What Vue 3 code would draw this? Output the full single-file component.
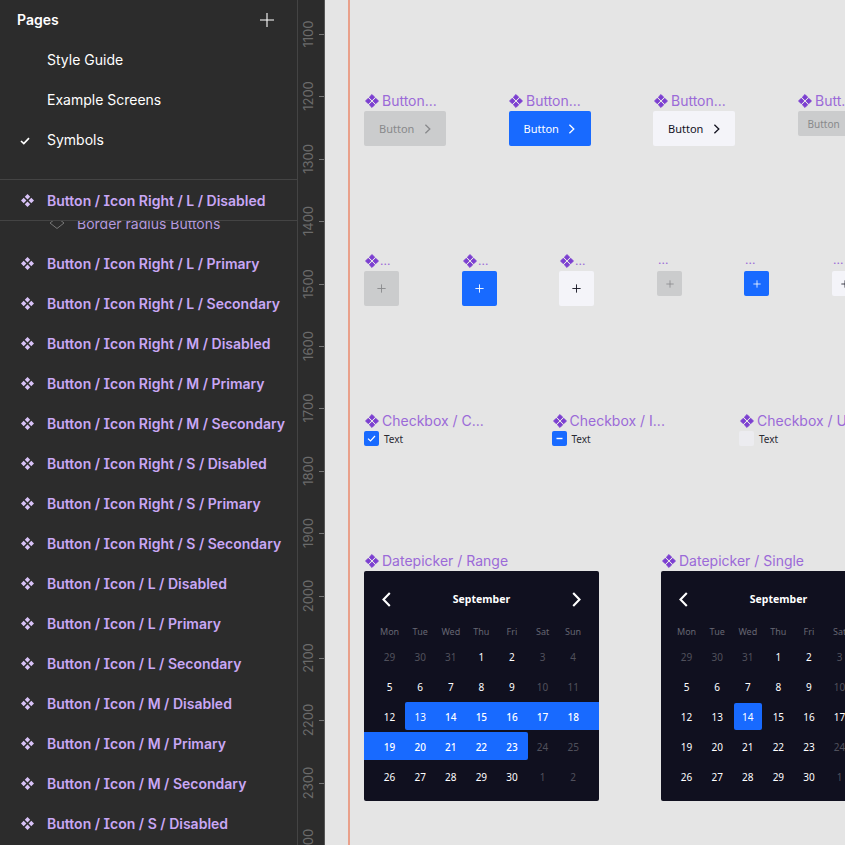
<script setup>
const pages = [
  { name: 'Style Guide' },
  { name: 'Example Screens' },
  { name: 'Symbols', checked: true }
]

const symbols = [
  'Button / Icon Right / L / Primary',
  'Button / Icon Right / L / Secondary',
  'Button / Icon Right / M / Disabled',
  'Button / Icon Right / M / Primary',
  'Button / Icon Right / M / Secondary',
  'Button / Icon Right / S / Disabled',
  'Button / Icon Right / S / Primary',
  'Button / Icon Right / S / Secondary',
  'Button / Icon / L / Disabled',
  'Button / Icon / L / Primary',
  'Button / Icon / L / Secondary',
  'Button / Icon / M / Disabled',
  'Button / Icon / M / Primary',
  'Button / Icon / M / Secondary',
  'Button / Icon / S / Disabled'
]

const rulerMarks = [1100, 1200, 1300, 1400, 1500, 1600, 1700, 1800, 1900, 2000, 2100, 2200, 2300, 2400].map((n, i) => ({
  n,
  y: 34 + i * 62.4
}))

const textButtons = [
  { x: 364, kind: 'disabled', label: 'Button...', labelX: 365 },
  { x: 508.5, kind: 'primary', label: 'Button...', labelX: 509 },
  { x: 653, kind: 'secondary', label: 'Button...', labelX: 654 }
]

const iconButtons = [
  { x: 364, kind: 'disabled' },
  { x: 462, kind: 'primary' },
  { x: 559, kind: 'secondary' }
]

const smallIconButtons = [
  { x: 657, kind: 'disabled' },
  { x: 744, kind: 'primary' },
  { x: 832, kind: 'secondary' }
]

const checkboxes = [
  { x: 364, label: 'Checkbox / C...', state: 'checked' },
  { x: 551.5, label: 'Checkbox / I...', state: 'mixed' },
  { x: 739, label: 'Checkbox / U', state: 'empty' }
]

const weekdays = ['Mon', 'Tue', 'Wed', 'Thu', 'Fri', 'Sat', 'Sun']

// semana a semana, muted = fuera de mes o fin de semana apagado
const days = [
  [29, 30, 31, 1, 2, 3, 4],
  [5, 6, 7, 8, 9, 10, 11],
  [12, 13, 14, 15, 16, 17, 18],
  [19, 20, 21, 22, 23, 24, 25],
  [26, 27, 28, 29, 30, 1, 2]
].flatMap((week, w) =>
  week.map((n, d) => ({
    id: `${w}-${d}`,
    n,
    muted:
      (w === 0 && (d < 3 || d > 4)) ||
      (w === 1 && d > 4) ||
      (w === 3 && d > 4) ||
      (w === 4 && d > 4),
    strong: (w === 2 && d > 1) || (w === 3 && d < 5)
  }))
)

const pickers = [
  { x: 364, label: 'Datepicker / Range', range: true },
  { x: 661, label: 'Datepicker / Single', range: false }
]
</script>

<template>
  <div class="app">
    <svg class="defs" width="0" height="0">
      <symbol id="comp" viewBox="0 0 12 12">
        <path d="M6 0 8.5 2.5 6 5 3.5 2.5Z M2.5 3.5 5 6 2.5 8.5 0 6Z M9.5 3.5 12 6 9.5 8.5 7 6Z M6 7 8.5 9.5 6 12 3.5 9.5Z" />
      </symbol>
      <symbol id="comp-bold" viewBox="-0.5 -0.5 13 13">
        <path d="M6 0 8.5 2.5 6 5 3.5 2.5Z M2.5 3.5 5 6 2.5 8.5 0 6Z M9.5 3.5 12 6 9.5 8.5 7 6Z M6 7 8.5 9.5 6 12 3.5 9.5Z" stroke="#7c3fd1" stroke-width="0.8" stroke-linejoin="round" />
      </symbol>
      <symbol id="chev-right" viewBox="0 0 12 12">
        <path d="M3.4 1.8 7.8 6 3.4 10.2" fill="none" stroke="currentColor" stroke-width="1.3" />
      </symbol>
      <symbol id="plus" viewBox="0 0 12 12">
        <path d="M6 0.5V11.5M0.5 6H11.5" fill="none" stroke="currentColor" stroke-width="1.2" />
      </symbol>
    </svg>

    <aside class="sidebar">
      <div class="pages-head">
        <span>Pages</span>
        <svg class="add" viewBox="0 0 14 14"><path d="M7 0V14M0 7H14" stroke="#fff" stroke-width="1.1" /></svg>
      </div>
      <div v-for="page in pages" :key="page.name" class="page-row">
        <svg v-if="page.checked" class="check" viewBox="0 0 10 8">
          <path d="M1 4 3.8 6.6 9 1.2" fill="none" stroke="#fff" stroke-width="1.7" />
        </svg>
        {{ page.name }}
      </div>

      <div class="layers">
        <div class="clipped">
          <svg class="outline" viewBox="0 0 16 16"><path d="M8 2.5 15 8 8 13.5 1 8Z" fill="none" stroke="#777" /></svg>
          <span>Border radius Buttons</span>
        </div>
        <div class="sticky-row symbol-row">
          <svg class="row-icon"><use href="#comp" /></svg>
          Button / Icon Right / L / Disabled
        </div>
        <div class="symbol-list">
          <div v-for="name in symbols" :key="name" class="symbol-row">
            <svg class="row-icon"><use href="#comp" /></svg>
            {{ name }}
          </div>
        </div>
      </div>
    </aside>

    <div class="ruler">
      <template v-for="mark in rulerMarks" :key="mark.n">
        <span class="ruler-label" :style="{ top: mark.y + 'px' }">{{ mark.n }}</span>
        <i class="ruler-tick" :style="{ top: mark.y + 'px' }"></i>
      </template>
    </div>

    <main class="canvas">
      <i class="guide"></i>

      <!-- Botones con texto -->
      <template v-for="b in textButtons" :key="b.x">
        <div class="frame-label" :style="{ left: b.labelX - 325 + 'px', top: '92px' }">
          <svg class="frame-icon"><use href="#comp-bold" /></svg>{{ b.label }}
        </div>
        <div class="btn btn-l" :class="b.kind" :style="{ left: b.x - 325 + 'px', top: '111px' }">
          Button <svg class="chev"><use href="#chev-right" /></svg>
        </div>
      </template>
      <div class="frame-label" :style="{ left: '473px', top: '92px' }">
        <svg class="frame-icon"><use href="#comp-bold" /></svg>Butt...
      </div>
      <div class="btn btn-m disabled" :style="{ left: '472.5px', top: '111px' }">Button</div>

      <!-- Botones de icono -->
      <template v-for="b in iconButtons" :key="b.x">
        <div class="frame-label" :style="{ left: b.x - 324 + 'px', top: '252px' }">
          <svg class="frame-icon"><use href="#comp-bold" /></svg><span class="dots">...</span>
        </div>
        <div class="icon-btn icon-l" :class="b.kind" :style="{ left: b.x - 325 + 'px', top: '271px' }">
          <svg class="plus"><use href="#plus" /></svg>
        </div>
      </template>
      <template v-for="b in smallIconButtons" :key="b.x">
        <div class="small-dots" :style="{ left: b.x - 325 + 'px' }">...</div>
        <div class="icon-btn icon-m" :class="b.kind" :style="{ left: b.x - 325 + 'px', top: '271px' }">
          <svg class="plus-s"><use href="#plus" /></svg>
        </div>
      </template>

      <!-- Checkboxes -->
      <template v-for="c in checkboxes" :key="c.x">
        <div class="frame-label" :style="{ left: c.x - 324 + 'px', top: '412px' }">
          <svg class="frame-icon"><use href="#comp-bold" /></svg>{{ c.label }}
        </div>
        <div class="checkbox-item" :style="{ left: c.x - 325 + 'px', top: '431px' }">
          <span class="box" :class="c.state">
            <svg v-if="c.state === 'checked'" viewBox="0 0 15 15"><path d="M4 7.6 6.5 10 11 5" fill="none" stroke="#fff" stroke-width="1.2" /></svg>
            <svg v-if="c.state === 'mixed'" viewBox="0 0 15 15"><path d="M4.5 7.5H10.5" fill="none" stroke="#fff" stroke-width="1.4" /></svg>
          </span>
          Text
        </div>
      </template>

      <!-- Datepickers -->
      <template v-for="p in pickers" :key="p.x">
        <div class="frame-label" :style="{ left: p.x - 324 + 'px', top: '552px' }">
          <svg class="frame-icon"><use href="#comp-bold" /></svg>{{ p.label }}
        </div>
        <div class="picker" :style="{ left: p.x - 325 + 'px' }">
          <template v-if="p.range">
            <i class="range range-a"></i>
            <i class="range range-b"></i>
          </template>
          <i v-else class="single"></i>
          <div class="picker-head">
            <svg class="nav" viewBox="0 0 9 15"><path d="M7.8 1 1.5 7.5 7.8 14" fill="none" stroke="#fff" stroke-width="2.1" /></svg>
            <strong>September</strong>
            <svg class="nav" viewBox="0 0 9 15"><path d="M1.2 1 7.5 7.5 1.2 14" fill="none" stroke="#fff" stroke-width="2.1" /></svg>
          </div>
          <div class="grid">
            <span v-for="d in weekdays" :key="d" class="weekday">{{ d }}</span>
            <span
              v-for="day in days"
              :key="day.id"
              class="day"
              :class="{ muted: day.muted, strong: p.range && day.strong }"
            >{{ day.n }}</span>
          </div>
        </div>
      </template>
    </main>
  </div>
</template>

<style>
html, body { margin: 0; overflow: hidden; background: #e5e5e5; }
</style>

<style scoped>
.app {
  display: flex;
  width: 845px;
  height: 845px;
  overflow: hidden;
  font-family: Inter, "Liberation Sans", sans-serif;
}
.defs { position: absolute; }

.sidebar {
  width: 297px;
  flex: none;
  background: #2c2c2c;
  color: #fff;
  font-size: 14px;
  display: flex;
  flex-direction: column;
  overflow: hidden;
}
.pages-head {
  display: flex;
  justify-content: space-between;
  align-items: center;
  height: 39px;
  padding: 0 23px 1px 17px;
  font-weight: 600;
}
.add { width: 14px; height: 14px; }
.page-row {
  height: 40px;
  line-height: 40px;
  padding-left: 47px;
  position: relative;
}
.check {
  position: absolute;
  left: 20px;
  top: 17px;
  width: 10px;
  height: 8px;
}
.layers {
  margin-top: 19px;
  border-top: 1px solid #444;
  position: relative;
}
.symbol-list { margin-top: 22px; }
.symbol-row {
  height: 40px;
  display: flex;
  align-items: center;
  padding-left: 47px;
  color: #c9a7f5;
  font-weight: 600;
  font-feature-settings: "cv08";
  position: relative;
  white-space: nowrap;
}
.row-icon {
  position: absolute;
  left: 21px;
  top: 13.5px;
  width: 13px;
  height: 13px;
  fill: #d8c2f7;
}
.sticky-row {
  background: #2c2c2c;
  border-bottom: 1px solid #444;
  z-index: 1;
}
.clipped {
  position: absolute;
  top: 29px;
  left: 47px;
  height: 28px;
  display: flex;
  align-items: center;
  color: #b59ade;
  white-space: nowrap;
}
.clipped span { margin-left: 30px; }
.clipped .outline {
  position: absolute;
  left: 2px;
  width: 16px;
  height: 16px;
}

.ruler {
  width: 26px;
  flex: none;
  background: #2c2c2c;
  border-left: 1px solid #444;
  border-right: 1px solid #555;
  position: relative;
  overflow: hidden;
}
.ruler-label {
  position: absolute;
  left: 10px;
  transform: translate(-50%, -50%) rotate(-90deg);
  color: #6b6b6b;
  font-size: 13px;
  line-height: 13px;
}
.ruler-tick {
  position: absolute;
  right: 0;
  width: 5px;
  height: 1px;
  background: #777;
}

.canvas {
  flex: 1;
  position: relative;
  background: #e5e5e5;
  overflow: hidden;
}
.guide {
  position: absolute;
  left: 23px;
  top: 0;
  bottom: 0;
  width: 2px;
  background: #e9a08a;
}
.frame-label {
  position: absolute;
  display: flex;
  align-items: center;
  height: 17px;
  color: #9b6ad8;
  font-size: 14px;
  white-space: nowrap;
}
.frame-icon {
  width: 14px;
  height: 14px;
  margin-right: 3px;
  fill: #7c3fd1;
}
.dots { margin-left: -2px; font-size: 12px; }
.small-dots {
  position: absolute;
  top: 253px;
  color: #9b6ad8;
  font-size: 12px;
  line-height: 14px;
  margin-left: 1px;
}

.btn {
  position: absolute;
  width: 82px;
  display: flex;
  align-items: center;
  border-radius: 2px;
  font-family: "Noto Sans", sans-serif;
  box-sizing: border-box;
  white-space: nowrap;
}
.btn-l { height: 35px; font-size: 11px; padding-left: 15px; }
.btn-m { height: 25px; font-size: 10px; padding-left: 10px; }
.chev { width: 12px; height: 12px; margin-left: 7.5px; }
.disabled { background: #cbcccd; color: #88898b; }
.primary { background: #186aff; color: #fff; }
.secondary { background: #f4f4f9; color: #12121f; }
.icon-btn {
  position: absolute;
  display: flex;
  align-items: center;
  justify-content: center;
  border-radius: 2px;
}
.icon-l { width: 35px; height: 35px; }
.icon-m { width: 25px; height: 25px; }
.plus { width: 9px; height: 9px; }
.plus-s { width: 8px; height: 8px; }

.checkbox-item {
  position: absolute;
  display: flex;
  align-items: center;
  height: 15px;
  font-size: 10px;
  color: #2a2a33;
  font-family: "Noto Sans", sans-serif;
}
.box {
  width: 15px;
  height: 15px;
  margin-right: 5px;
  border-radius: 2px;
  display: block;
}
.box svg { display: block; }
.box.checked, .box.mixed { background: #186aff; }
.box.empty { background: #ececf0; }

.picker {
  position: absolute;
  top: 571px;
  width: 234.5px;
  height: 230px;
  background: #10101f;
  border-radius: 2px;
  color: #fff;
  font-family: "Noto Sans", sans-serif;
  overflow: hidden;
}
.picker-head {
  position: relative;
  height: 54px;
  display: flex;
  align-items: center;
  justify-content: space-between;
  padding: 2px 17px 0 17.5px;
  box-sizing: border-box;
  font-size: 10.5px;
}
.nav { width: 9px; height: 15px; }
.grid {
  position: relative;
  display: grid;
  grid-template-columns: repeat(7, 30.6px);
  grid-template-rows: 17px;
  grid-auto-rows: 30px;
  padding-left: 10.3px;
}
.weekday {
  font-size: 9px;
  color: #666672;
  text-align: center;
  line-height: 14px;
}
.day {
  font-size: 10px;
  text-align: center;
  line-height: 30px;
}
.day.muted { color: #50505c; }
.day.strong { font-weight: 500; }
.range {
  position: absolute;
  background: #186aff;
  height: 27.5px;
}
.range-a { left: 41px; right: 0; top: 131px; border-radius: 2px 0 0 2px; }
.range-b { left: 0; width: 164px; top: 161px; border-radius: 0 2px 2px 0; }
.single {
  position: absolute;
  left: 73.3px;
  top: 131.5px;
  width: 27.5px;
  height: 27.5px;
  background: #186aff;
  border-radius: 2px;
}
</style>
